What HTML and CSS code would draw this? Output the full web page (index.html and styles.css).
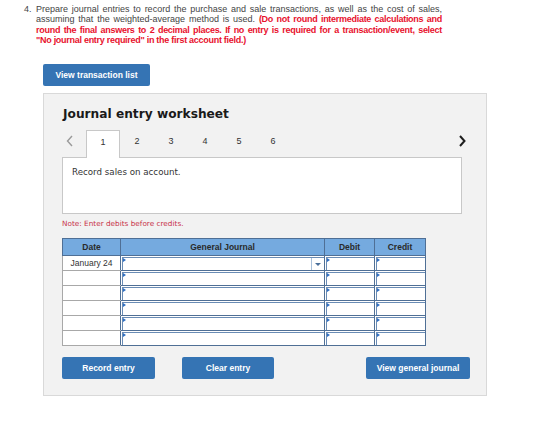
FILE: index.html
```html
<!DOCTYPE html>
<html lang="en">
<head>
    <meta charset="UTF-8">
    <title>Journal entry worksheet</title>
    <link rel="stylesheet" href="styles.css">
</head>
<body>
    <div class="question">
        <span class="q-num">4.</span>
        <p class="q-text">
            <span class="line">Prepare journal entries to record the purchase and sale transactions, as well as the cost of sales,</span>
            <span class="line">assuming that the weighted-average method is used. <strong class="warn">(Do not round intermediate calculations and</strong></span>
            <span class="line warn">round the final answers to 2 decimal places. If no entry is required for a transaction/event, select</span>
            <span class="line last warn">"No journal entry required" in the first account field.)</span>
        </p>
    </div>

    <button class="btn btn-list" type="button">View transaction list</button>

    <div class="panel">
        <h1>Journal entry worksheet</h1>

        <div class="tabs">
            <span class="arrow prev">
                <svg width="7" height="12" viewBox="0 0 7 12"><polyline points="6,1 1.5,6 6,11" fill="none" stroke="#9a9a9a" stroke-width="1.4"/></svg>
            </span>
            <span class="tab active">1</span>
            <span class="tab">2</span>
            <span class="tab">3</span>
            <span class="tab">4</span>
            <span class="tab">5</span>
            <span class="tab">6</span>
            <span class="arrow next">
                <svg width="7" height="12" viewBox="0 0 7 12"><polyline points="1,1 5.5,6 1,11" fill="none" stroke="#1f1f1f" stroke-width="2"/></svg>
            </span>
        </div>

        <div class="task">Record sales on account.</div>

        <div class="note">Note: Enter debits before credits.</div>

        <table class="journal">
            <thead>
                <tr>
                    <th class="c-date">Date</th>
                    <th class="c-acct">General Journal</th>
                    <th class="c-debit">Debit</th>
                    <th class="c-credit">Credit</th>
                </tr>
            </thead>
            <tbody>
                <tr>
                    <td class="date">January 24</td>
                    <td class="field select"><span class="caret"></span></td>
                    <td class="field"></td>
                    <td class="field"></td>
                </tr>
                <tr><td class="date"></td><td class="field"></td><td class="field"></td><td class="field"></td></tr>
                <tr><td class="date"></td><td class="field"></td><td class="field"></td><td class="field"></td></tr>
                <tr><td class="date"></td><td class="field"></td><td class="field"></td><td class="field"></td></tr>
                <tr><td class="date"></td><td class="field"></td><td class="field"></td><td class="field"></td></tr>
                <tr><td class="date"></td><td class="field"></td><td class="field"></td><td class="field"></td></tr>
            </tbody>
        </table>

        <div class="actions">
            <button class="btn btn-record" type="button">Record entry</button>
            <button class="btn btn-clear" type="button">Clear entry</button>
            <button class="btn btn-view" type="button">View general journal</button>
        </div>
    </div>
</body>
</html>
```

FILE: styles.css
```css
body {
    margin: 0;
    background-color: #ffffff;
    font-family: "Liberation Sans", Arial, sans-serif;
    color: #333333;
}
.question {
    display: flex;
    padding: 4px 0 0 24px;
    font-size: 9px;
    line-height: 10.3px;
    color: #444444;
}
.q-num {
    width: 12px;
    flex-shrink: 0;
}
.q-text {
    margin: 0;
    width: 406px;
}
.q-text .line {
    display: block;
    white-space: nowrap;
    text-align: justify;
    text-align-last: justify;
}
.q-text .line.last {
    text-align-last: left;
}
.warn {
    color: #e8112d;
    font-weight: bold;
    letter-spacing: -0.28px;
}
.btn {
    background-color: #3574b4;
    color: #ffffff;
    border: none;
    border-radius: 2px;
    font-family: "Liberation Sans", Arial, sans-serif;
    font-weight: bold;
    font-size: 8.5px;
    height: 22px;
    padding: 0;
    cursor: pointer;
}
.btn-list {
    display: block;
    margin: 19px 0 0 43px;
    width: 107px;
}
.panel {
    margin: 7px 0 0 43px;
    width: 444px;
    height: 303px;
    border: 1px solid #d9d9d9;
    background-color: #f2f2f2;
    padding: 0 18px;
    box-sizing: border-box;
}
.panel h1 {
    margin: 0;
    padding: 12px 0 0 1px;
    font-family: "DejaVu Sans", Verdana, sans-serif;
    font-size: 12.2px;
    line-height: 16px;
    color: #1a1a1a;
}
.tabs {
    display: flex;
    align-items: stretch;
    height: 27px;
    margin-top: 8px;
    position: relative;
    z-index: 1;
}
.arrow {
    display: flex;
    align-items: center;
    height: 22px;
    box-sizing: border-box;
}
.arrow.prev {
    width: 24px;
    padding-left: 4px;
}
.arrow.next {
    margin-left: auto;
    padding-right: 2px;
}
.tab {
    width: 34px;
    text-align: center;
    font-size: 9px;
    line-height: 22px;
    color: #333333;
    box-sizing: border-box;
}
.tab.active {
    background-color: #ffffff;
    border: 1px solid #c8c8c8;
    border-bottom: none;
    height: 28px;
}
.task {
    width: 400px;
    height: 57px;
    box-sizing: border-box;
    background-color: #ffffff;
    border: 1px solid #c8c8c8;
    padding: 9px 9px;
    font-family: "DejaVu Sans", Verdana, sans-serif;
    font-size: 8.7px;
    color: #333333;
}
.note {
    margin-top: 5px;
    font-family: "DejaVu Sans", Verdana, sans-serif;
    font-size: 7.3px;
    color: #c8324a;
}
.journal {
    margin-top: 10px;
    border-collapse: collapse;
    width: 363px;
    table-layout: fixed;
}
.journal th {
    height: 16px;
    padding: 0;
    background-color: #75aadf;
    border: 1px solid #4f6f95;
    font-size: 8.5px;
    color: #2a2a2a;
}
.c-date { width: 57px; }
.c-acct { width: 203px; }
.c-debit { width: 49px; }
.c-credit { width: 50px; }
.journal td {
    height: 14px;
    padding: 0;
    background-color: #ffffff;
}
.journal td.date {
    border: 1px solid #a8a8a8;
    border-right-color: #4f6f95;
    text-align: center;
    font-size: 8.5px;
    color: #333333;
}
.journal td.field {
    position: relative;
    border: 1px solid #4f6f95;
    box-shadow: inset 1px 1px 0 #ffffff, inset 2px 2px 0 #6a8cb5;
}
/* small flag at the top-left of each entry cell */
.journal td.field::before {
    content: "";
    position: absolute;
    left: 2px;
    top: 2px;
    border-left: 3px solid #2f6fc2;
    border-top: 2px solid transparent;
    border-bottom: 2px solid transparent;
}
.journal td.select .caret {
    position: absolute;
    right: 0;
    top: 2px;
    width: 12px;
    height: 12px;
    border-left: 1px solid #a9c0da;
}
.journal td.select .caret::after {
    content: "";
    position: absolute;
    left: 3px;
    top: 5px;
    border-top: 3px solid #4a6f9a;
    border-left: 3px solid transparent;
    border-right: 3px solid transparent;
}
.actions {
    display: flex;
    margin-top: 11px;
}
.btn-record {
    width: 93px;
}
.btn-clear {
    width: 92px;
    margin-left: 27px;
}
.btn-view {
    width: 104px;
    margin-left: auto;
    margin-right: -2px;
}
```
